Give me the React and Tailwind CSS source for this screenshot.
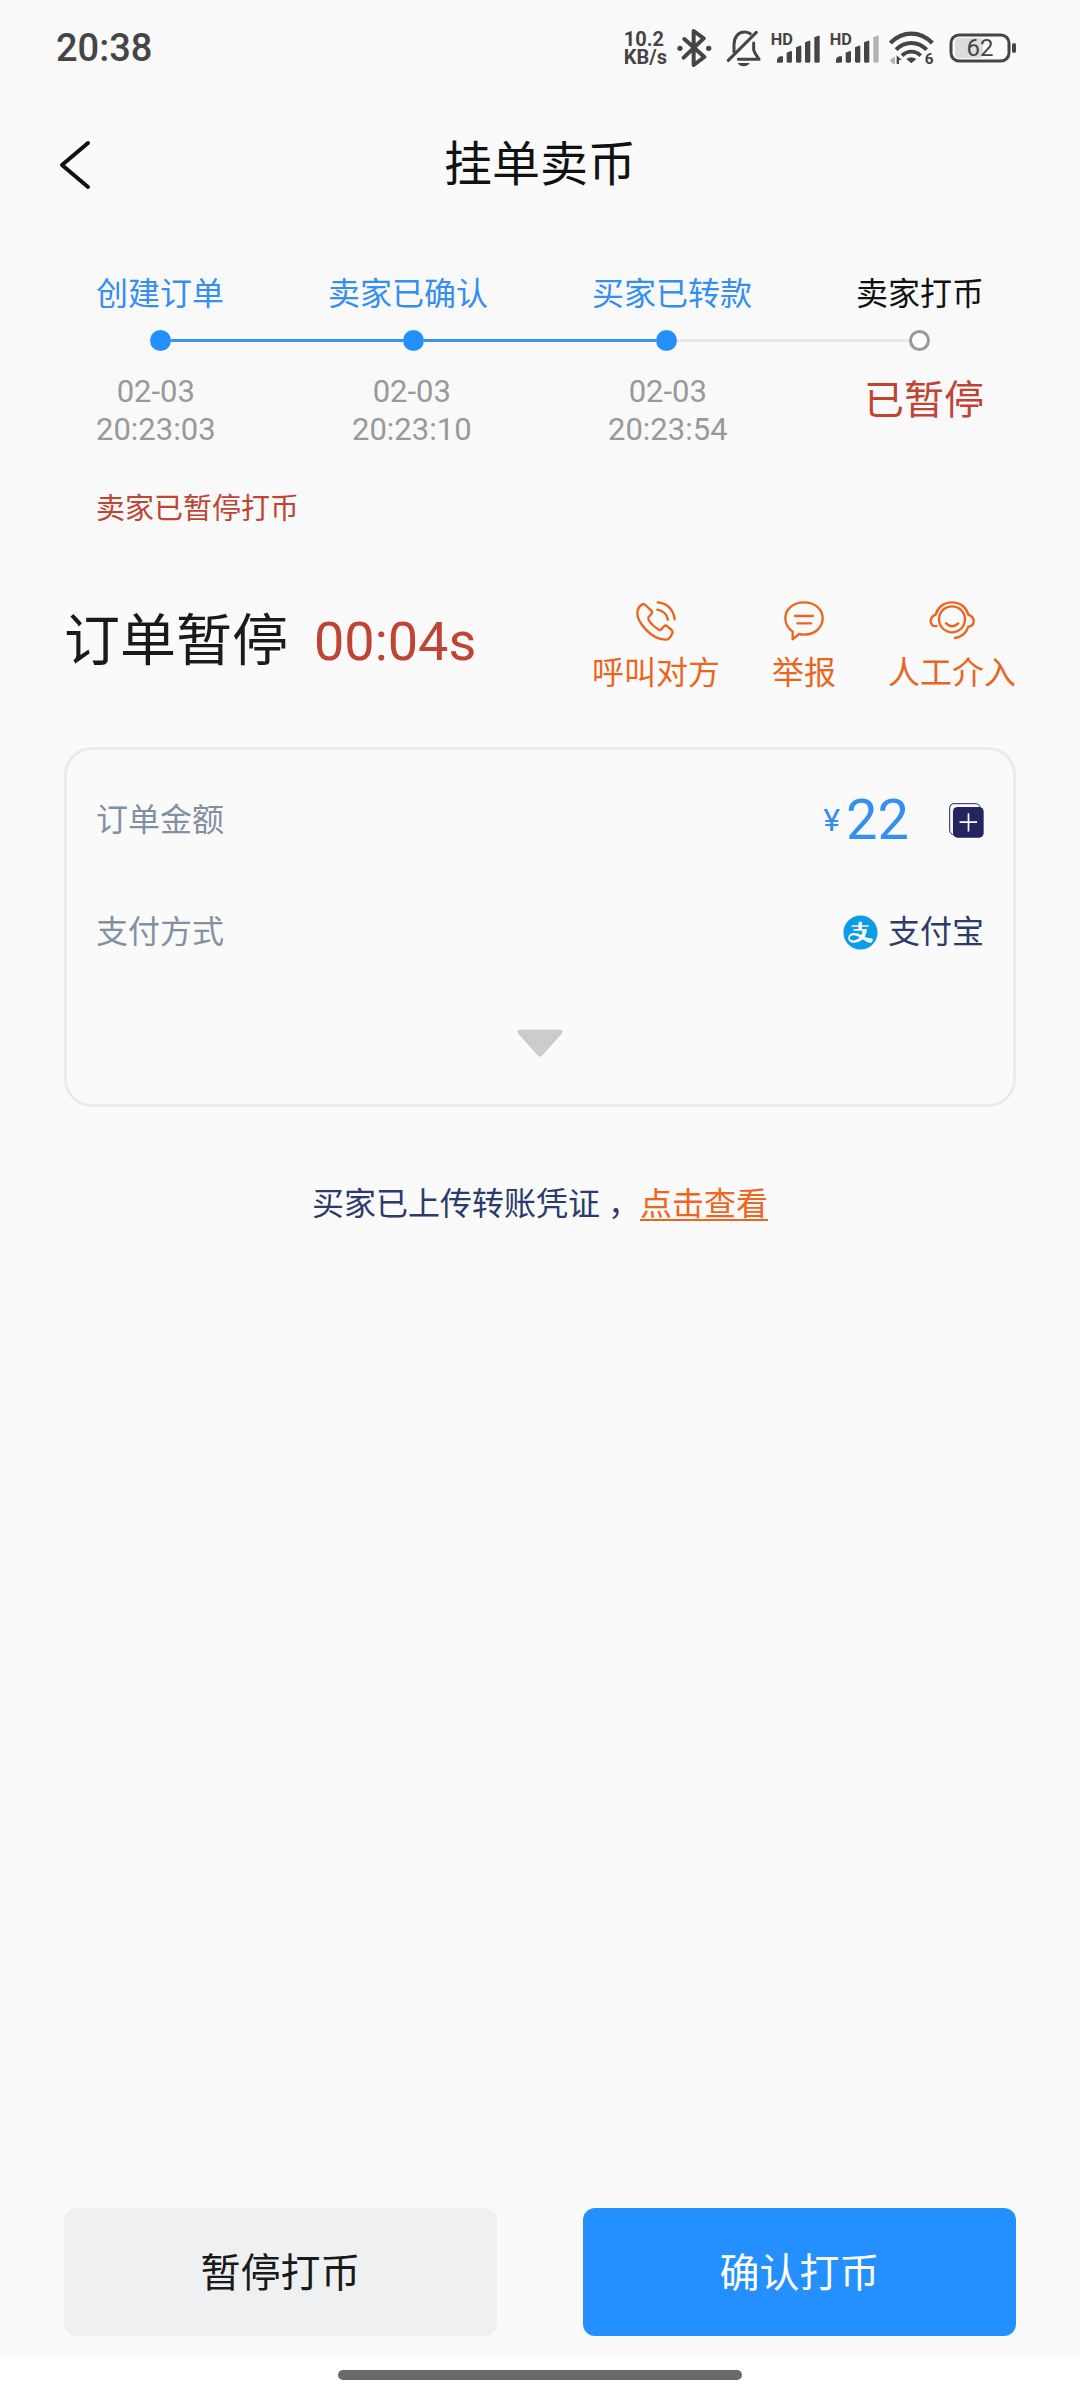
import { memo } from 'react';
import { AiFillAlipayCircle } from 'react-icons/ai';

const STEPS = [
    { label: '创建订单', date: '02-03', time: '20:23:03', done: true },
    { label: '卖家已确认', date: '02-03', time: '20:23:10', done: true },
    { label: '买家已转款', date: '02-03', time: '20:23:54', done: true },
    { label: '卖家打币', status: '已暂停', done: false },
];

function BluetoothIcon() {
    return (
        <svg viewBox="238 54 105 114" className="h-[38px] w-[35px]" aria-hidden="true">
            <path
                d="M260 84 320 138 288 162V60L318 82 258 140"
                fill="none"
                stroke="#454545"
                strokeWidth="12"
                strokeLinecap="round"
                strokeLinejoin="round"
            />
            <circle cx="247" cy="112" r="8" fill="#454545" />
            <circle cx="333" cy="112" r="8" fill="#454545" />
        </svg>
    );
}

function MutedBellIcon() {
    return (
        <svg viewBox="383 56 105 114" className="h-[38px] w-[35px]" aria-hidden="true">
            <g
                fill="none"
                stroke="#454545"
                strokeWidth="9"
                strokeLinecap="round"
                strokeLinejoin="round"
            >
                <path d="M407 124V104C407 80 420 65 438 65 445 65 451 67 456 70" />
                <path d="M390 150 474 66" />
                <path d="M466 98V118C468 130 477 138 482 147H420" />
            </g>
            <path d="M418 158H454Q448 168 436 168T418 158Z" fill="#454545" />
        </svg>
    );
}

function SignalIcon({ weak }) {
    return (
        <svg
            viewBox="518 62 147 96"
            className="h-8 w-[49px] overflow-visible"
            aria-hidden="true"
        >
            <text
                x="517"
                y="101"
                fontSize="49"
                fontWeight="700"
                fill="#454545"
                fontFamily="Roboto, sans-serif"
            >
                HD
            </text>
            <g fill="#454545">
                <path d="M536 154V145Q537 137 546 135H554V150Q554 154 550 154Z" />
                <path d="M565 124 577 119Q581 118 581 122V150Q581 154 577 154H569Q565 154 565 150Z" />
                <path d="M593 108 605 103Q609 102 609 106V150Q609 154 605 154H597Q593 154 593 150Z" />
                <path d="M620 93 632 88Q636 87 636 91V150Q636 154 632 154H624Q620 154 620 150Z" />
                <path
                    d="M648 78 660 73Q664 72 664 76V150Q664 154 660 154H652Q648 154 648 150Z"
                    fill={weak ? '#b2b2b2' : '#454545'}
                />
            </g>
        </svg>
    );
}

function WifiIcon() {
    return (
        <svg
            viewBox="872 60 138 108"
            className="h-9 w-[46px] overflow-visible"
            aria-hidden="true"
        >
            <g fill="none" stroke="#454545" strokeWidth="13">
                <path d="M876 99Q904 71 939 71T1002 99" />
                <path d="M893 119Q913 99 939 99T985 119" strokeWidth="12" />
                <path d="M911 137Q923 125 939 125T967 137" strokeWidth="11" />
            </g>
            <path d="M924 147Q939 136 954 147L941 158Q939 160 937 158Z" fill="#454545" />
            <path d="M874 150 890 140V162H884Z" fill="#b2b2b2" />
            <path d="M895 162V136L910 150H902V162Z" fill="#454545" />
            <text
                x="979"
                y="163"
                fontSize="46"
                fontWeight="700"
                fill="#454545"
                fontFamily="Roboto, sans-serif"
            >
                6
            </text>
        </svg>
    );
}

function BatteryIcon() {
    return (
        <svg viewBox="0 0 67 30" className="h-[30px] w-[67px]" role="img" aria-label="62%">
            <rect x="6" y="5" width="28" height="20" rx="4" fill="#dcdcdc" />
            <rect
                x="2"
                y="2"
                width="58"
                height="26"
                rx="8"
                fill="none"
                stroke="#454545"
                strokeWidth="3"
            />
            <rect x="63" y="10" width="4" height="10" rx="2" fill="#454545" />
            <text
                x="31"
                y="23"
                textAnchor="middle"
                fontSize="24"
                fill="#454545"
                fontFamily="Roboto, sans-serif"
            >
                62
            </text>
        </svg>
    );
}

function PhoneIcon() {
    return (
        <svg
            viewBox="195 63 120 120"
            className="h-10 w-10"
            fill="none"
            stroke="currentColor"
            strokeWidth="7"
            strokeLinecap="round"
            strokeLinejoin="round"
            aria-hidden="true"
        >
            <path d="M199 100C199 88 203 80 212 74 216 72 220 72 223 75L241 92C245 96 243 99 241 102L233 111C231 114 231 117 233 120 241 133 251 142 264 149 267 151 270 150 272 147L279 139C282 136 286 136 289 139L302 150C306 154 305 158 303 162 299 172 294 179 284 179 262 179 243 168 224 148 207 130 199 114 199 100Z" />
            <path d="M260 67C287 68 308 89 311 118" />
            <path d="M259 89C275 92 288 103 291 119" />
        </svg>
    );
}

function ReportIcon() {
    return (
        <svg
            viewBox="640 65 120 120"
            className="h-10 w-10"
            fill="none"
            stroke="currentColor"
            strokeWidth="7"
            strokeLinecap="round"
            strokeLinejoin="round"
            aria-hidden="true"
        >
            <path d="M666 180V157C652 147 644 134 644 117 644 89 668 69 700 69S756 89 756 117 732 166 700 166C695 166 690 165 685 164Z" />
            <path d="M673 110H727M680 132H721" />
        </svg>
    );
}

function SupportIcon() {
    return (
        <svg
            viewBox="1078 63 138 120"
            className="h-10 w-[46px]"
            fill="none"
            stroke="currentColor"
            strokeWidth="7"
            strokeLinecap="round"
            strokeLinejoin="round"
            aria-hidden="true"
        >
            <circle cx="1147" cy="118" r="39" />
            <path d="M1100 138C1090 140 1083 133 1083 124 1083 115 1088 108 1098 104 1104 82 1122 67 1147 67S1190 82 1196 104C1206 108 1212 115 1212 123 1212 132 1206 139 1196 140 1190 159 1176 171 1156 174" />
            <path d="M1129 130Q1147 147 1166 130" />
        </svg>
    );
}

const ACTIONS = [
    { label: '呼叫对方', Icon: PhoneIcon },
    { label: '举报', Icon: ReportIcon },
    { label: '人工介入', Icon: SupportIcon },
];

const StatusBar = () => (
    <div className="flex h-24 items-center justify-between pr-16 pl-14 text-[#454545]">
        <span className="text-[38px] leading-none font-medium">20:38</span>
        <div className="flex items-center gap-2.5">
            <div className="text-[20px] leading-[18px] font-bold">
                <div>10.2</div>
                <div>KB/s</div>
            </div>
            <BluetoothIcon />
            <span className="pl-1">
                <MutedBellIcon />
            </span>
            <SignalIcon />
            <SignalIcon weak />
            <WifiIcon />
            <span className="pl-1">
                <BatteryIcon />
            </span>
        </div>
    </div>
);

const Progress = () => (
    <section className="mt-1.5 rounded-[30px] bg-[#f9f9f9] px-8 pt-[34px] pb-[30px]">
        <div className="flex justify-between text-[32px] leading-10">
            {STEPS.map((step) => (
                <span
                    key={step.label}
                    className={step.done ? 'text-[#348ff0]' : 'text-[#111111]'}
                >
                    {step.label}
                </span>
            ))}
        </div>
        <div className="mt-4 flex items-center px-[54px]">
            {STEPS.map((step, i) => (
                <div
                    key={step.label}
                    className={i === 0 ? 'flex items-center' : 'flex flex-1 items-center'}
                >
                    {i > 0 && (
                        <span
                            className={`h-[3px] flex-1 ${
                                step.done ? 'bg-[#3e93ea]' : 'bg-[#e8e8e8]'
                            }`}
                        />
                    )}
                    <span
                        className={`size-[21px] rounded-full ${
                            step.done
                                ? 'bg-[#248fff]'
                                : 'border-3 border-[#999999] bg-white'
                        }`}
                    />
                </div>
            ))}
        </div>
        <div className="mt-[22px] flex justify-between text-center text-[31px] leading-[38px] text-[#999999]">
            {STEPS.map((step) =>
                step.status ? (
                    <span
                        key={step.label}
                        className="text-[40px] leading-[56px] text-[#c04434]"
                    >
                        {step.status}
                    </span>
                ) : (
                    <div key={step.label}>
                        <div>{step.date}</div>
                        <div>{step.time}</div>
                    </div>
                )
            )}
        </div>
        <p className="mt-10 text-[29px] leading-10 text-[#c04434]">
            卖家已暂停打币
        </p>
    </section>
);

const App = () => {
    return (
        <div className="flex min-h-screen flex-col bg-[#fafafa] font-[Roboto,'Noto_Sans_CJK_SC',sans-serif]">
            <StatusBar />

            <header className="grid h-[138px] grid-cols-[1fr_auto_1fr] items-center px-14">
                <button type="button" aria-label="返回" className="justify-self-start">
                    <svg viewBox="0 0 36 50" className="h-[50px] w-9" aria-hidden="true">
                        <path
                            d="M32 3 6 25 32 47"
                            fill="none"
                            stroke="#111111"
                            strokeWidth="4"
                            strokeLinecap="round"
                            strokeLinejoin="round"
                        />
                    </svg>
                </button>
                <h1 className="text-5xl text-[#111111]">挂单卖币</h1>
            </header>

            <main className="flex-1 px-16">
                <Progress />

                <section className="mt-[42px] flex items-start justify-between">
                    <div className="flex items-baseline gap-[26px] pt-2">
                        <h2 className="text-[56px] leading-[64px] text-[#1a1a1a]">
                            订单暂停
                        </h2>
                        <span className="text-[54px] leading-[64px] text-[#c04434]">
                            00:04s
                        </span>
                    </div>
                    <div className="flex gap-[52px] text-[#ea661e]">
                        {ACTIONS.map(({ label, Icon }) => (
                            <button
                                key={label}
                                type="button"
                                className="flex cursor-pointer flex-col items-center gap-3 text-[32px] leading-10"
                            >
                                <Icon />
                                {label}
                            </button>
                        ))}
                    </div>
                </section>

                <section className="mt-[54px] rounded-[28px] border-3 border-[#ebebeb] px-[29px] pt-[38px] pb-[46px]">
                    <div className="flex h-16 items-center justify-between">
                        <span className="text-[32px] text-[#8290a3]">订单金额</span>
                        <div className="flex items-center text-[#348ff0]">
                            <span className="text-[32px]">¥</span>
                            <span className="ml-1.5 text-[56px] leading-[64px]">22</span>
                            <button
                                type="button"
                                aria-label="复制"
                                className="ml-10 cursor-pointer"
                            >
                                <svg
                                    viewBox="509 189 106 106"
                                    className="size-[35px]"
                                    aria-hidden="true"
                                >
                                    <rect
                                        x="511"
                                        y="191"
                                        width="92"
                                        height="94"
                                        rx="13"
                                        fill="none"
                                        stroke="#232560"
                                        strokeWidth="3"
                                    />
                                    <rect x="521" y="201" width="93" height="93" rx="14" fill="#232560" />
                                    <path
                                        d="M541 247H594M568 220V275"
                                        stroke="#ffffff"
                                        strokeWidth="5"
                                    />
                                </svg>
                            </button>
                        </div>
                    </div>
                    <div className="mt-12 flex h-16 items-center justify-between text-[32px]">
                        <span className="text-[#8290a3]">支付方式</span>
                        <div className="flex items-center gap-2 text-[#2c3b6b]">
                            <AiFillAlipayCircle className="size-[39px] text-[#0d9de6]" />
                            支付宝
                        </div>
                    </div>
                    <button
                        type="button"
                        aria-label="展开"
                        className="mx-auto mt-16 block cursor-pointer"
                    >
                        <svg viewBox="0 0 48 30" className="h-[30px] w-12" aria-hidden="true">
                            <path
                                d="M4 4H44L24 26Z"
                                fill="#cccccc"
                                stroke="#cccccc"
                                strokeWidth="5"
                                strokeLinejoin="round"
                            />
                        </svg>
                    </button>
                </section>

                <p className="mt-[77px] text-center text-[32px] leading-10 text-[#2c3b6b]">
                    买家已上传转账凭证
                    <span className="pl-2">，</span>
                    <a
                        href="#voucher"
                        className="text-[#f0641e] underline decoration-2 underline-offset-4"
                    >
                        点击查看
                    </a>
                </p>
            </main>

            <div className="flex gap-[86px] px-16 pb-[21px] text-[40px]">
                <button
                    type="button"
                    className="h-32 flex-1 cursor-pointer rounded-xl bg-[#eff0f2] pt-1 text-[#1a1a1a]"
                >
                    暂停打币
                </button>
                <button
                    type="button"
                    className="h-32 flex-1 cursor-pointer rounded-xl bg-[#248fff] pt-1 text-white"
                >
                    确认打币
                </button>
            </div>
            <div className="flex h-[43px] items-center justify-center bg-white pb-2">
                <span className="h-2.5 w-[404px] rounded-full bg-[#6a6a6a]" />
            </div>
        </div>
    );
};

export default memo(App);
